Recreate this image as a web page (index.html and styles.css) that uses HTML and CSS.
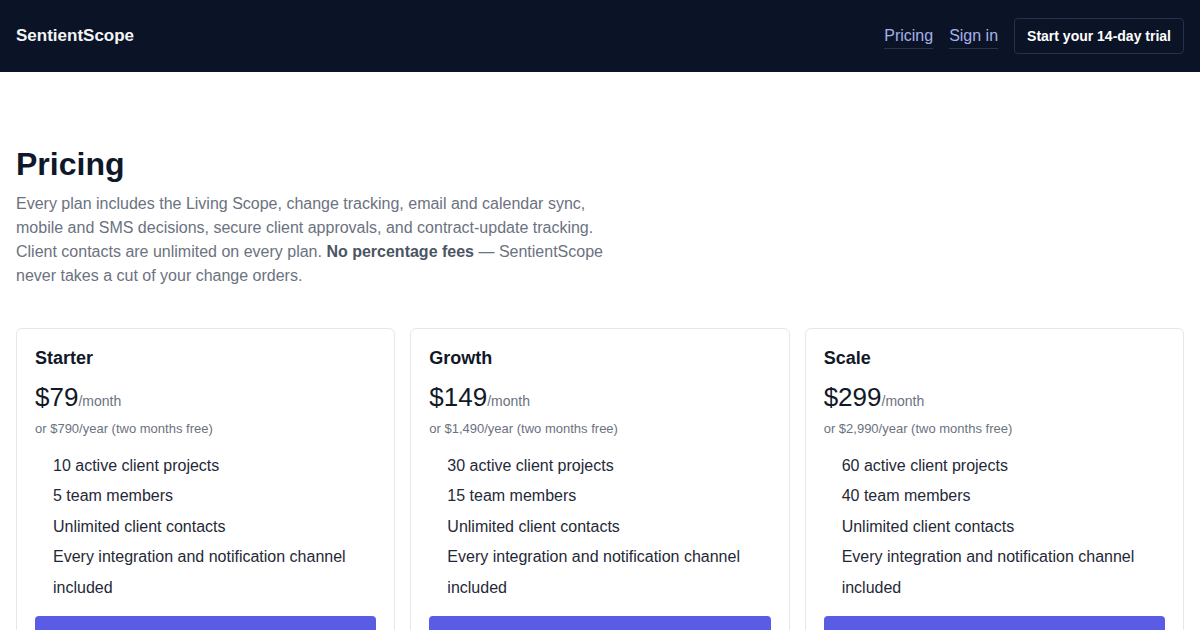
FILE: index.html
```html
<!DOCTYPE html>
<html lang="en">
<head>
<meta charset="utf-8">
<title>Pricing — SentientScope</title>
<link rel="stylesheet" href="styles.css">
</head>
<body>
<header class="topbar">
  <a class="brand" href="#">SentientScope</a>
  <nav class="nav">
    <a class="nav-link" href="#">Pricing</a>
    <a class="nav-link" href="#">Sign in</a>
    <a class="nav-cta" href="#">Start your 14-day trial</a>
  </nav>
</header>
<main class="page">
  <h1 class="title">Pricing</h1>
  <p class="lead">Every plan includes the Living Scope, change tracking, email and calendar sync, mobile and SMS decisions, secure client approvals, and contract-update tracking. Client contacts are unlimited on every plan. <strong>No percentage fees</strong> — SentientScope never takes a cut of your change orders.</p>
  <section class="plans">
    <article class="plan">
      <h2 class="plan-name">Starter</h2>
      <div class="price"><span class="amount">$79</span><span class="per">/month</span></div>
      <div class="annual">or $790/year (two months free)</div>
      <ul class="features">
        <li>10 active client projects</li>
        <li>5 team members</li>
        <li>Unlimited client contacts</li>
        <li>Every integration and notification channel included</li>
      </ul>
      <a class="plan-btn" href="#">Start trial</a>
    </article>
    <article class="plan">
      <h2 class="plan-name">Growth</h2>
      <div class="price"><span class="amount">$149</span><span class="per">/month</span></div>
      <div class="annual">or $1,490/year (two months free)</div>
      <ul class="features">
        <li>30 active client projects</li>
        <li>15 team members</li>
        <li>Unlimited client contacts</li>
        <li>Every integration and notification channel included</li>
      </ul>
      <a class="plan-btn" href="#">Start trial</a>
    </article>
    <article class="plan">
      <h2 class="plan-name">Scale</h2>
      <div class="price"><span class="amount">$299</span><span class="per">/month</span></div>
      <div class="annual">or $2,990/year (two months free)</div>
      <ul class="features">
        <li>60 active client projects</li>
        <li>40 team members</li>
        <li>Unlimited client contacts</li>
        <li>Every integration and notification channel included</li>
      </ul>
      <a class="plan-btn" href="#">Start trial</a>
    </article>
  </section>
</main>
</body>
</html>
```

FILE: styles.css
```css
* { box-sizing: border-box; }
html, body { margin: 0; padding: 0; }
body {
  font-family: "Liberation Sans", Arial, sans-serif;
  color: #111827;
  background: #ffffff;
}
a { text-decoration: none; }

.topbar {
  height: 72px;
  background: #0b1426;
  display: flex;
  align-items: center;
  justify-content: space-between;
  padding: 0 16px;
}
.brand {
  color: #f3f4f6;
  font-weight: 700;
  font-size: 17px;
}
.nav {
  display: flex;
  align-items: center;
  gap: 16px;
}
.nav-link {
  color: #a5b0e8;
  font-size: 16px;
  line-height: 20px;
  padding: 1px 0 2px;
  margin-top: 2px;
  border-bottom: 1px solid #283350;
}
.nav-cta {
  color: #ffffff;
  font-weight: 700;
  font-size: 14px;
  border: 1px solid #263149;
  border-radius: 4px;
  padding: 9px 12px;
  line-height: 16px;
}

.page {
  padding: 73px 16px 0;
}
.title {
  margin: 0;
  font-size: 32px;
  line-height: 38px;
  font-weight: 700;
  color: #0f172a;
}
.lead {
  margin: 9px 0 0;
  max-width: 600px;
  font-size: 16px;
  line-height: 24px;
  color: #6b7280;
}
.lead strong { color: #4b5563; }

.plans {
  margin-top: 40px;
  display: grid;
  grid-template-columns: repeat(3, 1fr);
  gap: 15px;
}
.plan {
  border: 1px solid #e5e7eb;
  border-radius: 6px;
  padding: 18px;
  background: #fff;
}
.plan-name {
  margin: 0;
  font-size: 18px;
  line-height: 22px;
  font-weight: 700;
  color: #111827;
}
.price {
  margin-top: 13px;
  line-height: 31px;
}
.amount {
  font-size: 26px;
  color: #111827;
}
.per {
  font-size: 14px;
  color: #6b7280;
}
.annual {
  margin-top: 3px;
  font-size: 13px;
  line-height: 18px;
  color: #6b7280;
}
.features {
  list-style: none;
  margin: 13px 0 0;
  padding: 0 0 0 18px;
  font-size: 16px;
  line-height: 1.9;
  color: #1f2937;
}
.plan-btn {
  display: block;
  margin-top: 13px;
  background: #5b5ce6;
  color: #fff;
  text-align: center;
  font-weight: 700;
  font-size: 15px;
  padding: 12px;
  border-radius: 4px;
}
```
